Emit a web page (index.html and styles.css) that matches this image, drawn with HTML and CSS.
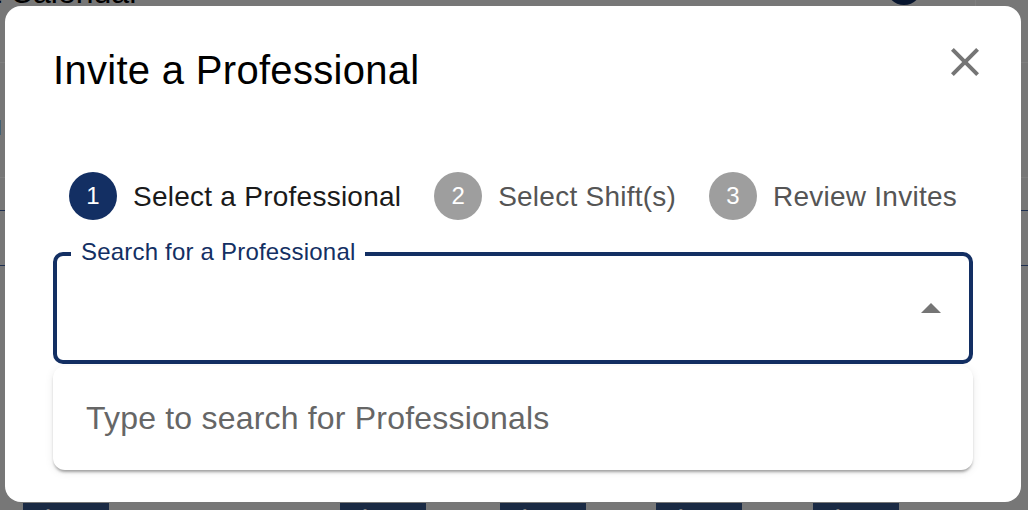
FILE: index.html
```html
<!DOCTYPE html>
<html lang="en">
<head>
<meta charset="utf-8">
<title>Invite a Professional</title>
<link rel="stylesheet" href="styles.css">
</head>
<body>
<div class="page">
  <header class="page-head">
    <h1 class="page-title">Shift Calendar</h1>
    <span class="avatar"></span>
    <span class="vline"></span>
  </header>
  <div class="page-body">
    <div class="row row-a"><span class="row-letter">N</span></div>
    <div class="row row-b"></div>
    <div class="row row-c"></div>
  </div>
  <div class="chips">
    <span class="chip">6/1 PM</span>
    <span class="chip">6/1 PM</span>
    <span class="chip">6/1 AM</span>
    <span class="chip">6/1 AM</span>
    <span class="chip">6/1 AM</span>
  </div>
</div>
<div class="backdrop"></div>
<div class="dialog" role="dialog" aria-labelledby="dlg-title">
  <h2 class="dialog-title" id="dlg-title">Invite a Professional</h2>
  <button class="close" aria-label="close">
    <svg viewBox="0 0 24 24" width="48" height="48"><path d="M19 6.41 17.59 5 12 10.59 6.41 5 5 6.41 10.59 12 5 17.59 6.41 19 12 13.41 17.59 19 19 17.59 13.41 12z"/></svg>
  </button>
  <div class="dialog-content">
    <ol class="stepper">
      <li class="step active"><span class="step-icon">1</span><span class="step-label">Select a Professional</span></li>
      <li class="step"><span class="step-icon">2</span><span class="step-label">Select Shift(s)</span></li>
      <li class="step"><span class="step-icon">3</span><span class="step-label">Review Invites</span></li>
    </ol>
    <fieldset class="search">
      <legend>Search for a Professional</legend>
      <div class="search-input"><span class="caret"></span></div>
    </fieldset>
    <div class="listbox">Type to search for Professionals</div>
  </div>
</div>
</body>
</html>
```
FILE: styles.css
```css
html, body {
  margin: 0;
  padding: 0;
}
body {
  width: 1028px;
  height: 510px;
  overflow: hidden;
  font-family: "Liberation Sans", Arial, Helvetica, sans-serif;
}

/* page behind the modal */
.page {
  height: 510px;
  background: #eeeeee;
  display: flex;
  flex-direction: column;
  overflow: hidden;
}
.page-head {
  display: flex;
  align-items: flex-start;
  height: 62px;
  flex: none;
  border-bottom: 1px solid #ffffff;
}
.page-title {
  margin: -24px 0 0 -63px;
  font-size: 32px;
  line-height: 32px;
  font-weight: 400;
  color: #000;
  white-space: nowrap;
}
.avatar {
  width: 36px;
  height: 36px;
  border-radius: 50%;
  background: #0f2a5c;
  margin: -31px 0 0 auto;
}
.vline {
  width: 1px;
  height: 62px;
  background: #ffffff;
  margin: 0 52px 0 53px;
}
.page-body {
  flex: 1;
  display: flex;
  flex-direction: column;
}
.row-a {
  height: 114px;
  border-bottom: 1px solid #ffffff;
}
.row-letter {
  display: block;
  margin: 52px 0 0 -14px;
  font-size: 22px;
  color: #000;
}
.row-b {
  height: 32px;
  border-bottom: 1px solid #3d5fa0;
}
.row-c {
  height: 54px;
  border-bottom: 1px solid #3d5fa0;
}
.chips {
  display: grid;
  grid-template-columns: 317px 160px 156px 157px 157px;
  padding-left: 23px;
  height: 30px;
  margin-bottom: -23px;
  flex: none;
}
.chip {
  width: 86px;
  height: 30px;
  background: #345489;
  color: #ffffff;
  font-size: 22px;
  font-weight: 700;
  line-height: 30px;
  text-align: center;
}

.backdrop {
  position: fixed;
  inset: 0;
  background: rgba(0, 0, 0, 0.5);
}

/* dialog */
.dialog {
  position: fixed;
  left: 5px;
  top: 6px;
  width: 1016px;
  box-sizing: border-box;
  background: #ffffff;
  border-radius: 16px;
}
.dialog-title {
  margin: 0;
  padding: 32px 48px 0;
  font-size: 40px;
  line-height: 64px;
  font-weight: 400;
  letter-spacing: 0.3px;
  color: #000000;
}
.close {
  position: absolute;
  top: 16px;
  right: 16px;
  padding: 16px;
  border: 0;
  background: none;
  line-height: 0;
  cursor: pointer;
}
.close svg {
  fill: #757575;
  display: block;
}
.dialog-content {
  padding: 70px 48px 32px;
}

/* stepper */
.stepper {
  list-style: none;
  margin: 0;
  padding: 0;
  display: flex;
  justify-content: space-between;
  align-items: center;
}
.step {
  display: flex;
  align-items: center;
  gap: 16px;
  padding: 0 16px;
  white-space: nowrap;
}
.step-icon {
  width: 48px;
  height: 48px;
  border-radius: 50%;
  background: #9e9e9e;
  color: #ffffff;
  font-size: 24px;
  display: flex;
  align-items: center;
  justify-content: center;
  flex: none;
}
.step.active .step-icon {
  background: #132f63;
}
.step-label {
  font-size: 28px;
  line-height: 40px;
  letter-spacing: 0.25px;
  color: #555555;
  padding-top: 2px;
}
.step.active .step-label {
  color: #1a1a1a;
}

/* search field */
.search {
  margin: 22px 0 0;
  padding: 0;
  border: 4px solid #132f63;
  border-radius: 10px;
  min-width: 0;
}
.search legend {
  margin-left: 14px;
  padding: 0 10px 4px;
  font-size: 24px;
  line-height: 20px;
  letter-spacing: 0.2px;
  color: #132f63;
}
.search-input {
  height: 94px;
  box-sizing: border-box;
  display: flex;
  align-items: center;
  justify-content: flex-end;
  padding: 0 28px 10px 0;
}
.caret {
  width: 0;
  height: 0;
  border-left: 10px solid transparent;
  border-right: 10px solid transparent;
  border-bottom: 10px solid #757575;
}

/* dropdown */
.listbox {
  margin-top: 2px;
  padding: 28px 33px;
  font-size: 32px;
  line-height: 48px;
  letter-spacing: 0.2px;
  color: #666666;
  border-radius: 12px;
  background: #ffffff;
  box-shadow: 0 3px 3px -1px rgba(0,0,0,0.35), 0 2px 10px rgba(0,0,0,0.08);
}
```
